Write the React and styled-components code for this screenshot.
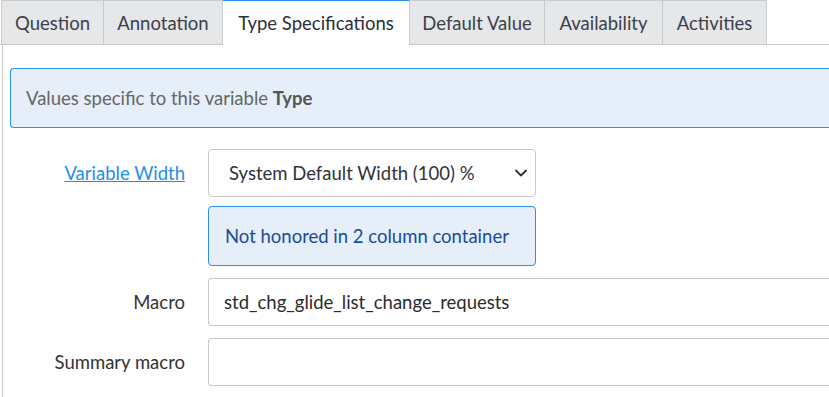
import React from 'react';
import styled, { createGlobalStyle } from 'styled-components';

const GlobalStyle = createGlobalStyle`
  html, body {
    margin: 0;
    padding: 0;
    background: #fff;
    overflow: hidden;
  }
  body {
    font-family: Lato, "Open Sans", sans-serif;
    font-size: 18.5px;
    color: #2e2e2e;
  }
`;

const Page = styled.div`
  width: 829px;
  height: 397px;
  overflow: hidden;
`;

const TabBar = styled.div`
  display: flex;
  padding-left: 1px;
  border-bottom: 1px solid #c9cbcd;
  height: 44px;
`;

const Tab = styled.div`
  display: flex;
  align-items: center;
  justify-content: center;
  width: ${(p) => p.$w}px;
  box-sizing: border-box;
  border: 1px solid #c9cbcd;
  border-left-width: ${(p) => (p.$first ? 1 : 0)}px;
  border-bottom: none;
  background: ${(p) => (p.$active ? '#fff' : '#e6e7e8')};
  color: ${(p) => (p.$active ? '#2b2f3a' : '#3b414b')};
  border-top-color: ${(p) => (p.$active ? '#2c8ef0' : '#c9cbcd')};
  margin-bottom: ${(p) => (p.$active ? '-1px' : '0')};
  height: ${(p) => (p.$active ? '45px' : '44px')};
  padding-bottom: ${(p) => (p.$active ? '1px' : '0')};
  white-space: nowrap;
`;

const Panel = styled.div`
  border-left: 1px solid #c9cbcd;
  margin-left: 2px;
  padding: 23px 0 0 7px;
  height: 340px;
`;

const InfoBox = styled.div`
  background: #e5eef9;
  border: 1px solid #2c8ef0;
  border-right: none;
  border-radius: 4px 0 0 4px;
  height: 60px;
  box-sizing: border-box;
  display: flex;
  align-items: center;
  padding-left: 15px;
  color: #666;
  b {
    font-weight: 700;
    color: #555;
  }
`;

const Form = styled.div`
  display: grid;
  grid-template-columns: 175px 1fr;
  column-gap: 23px;
  row-gap: 12px;
  margin-top: 21px;
`;

const Label = styled.div`
  display: flex;
  justify-content: flex-end;
  align-items: center;
  height: 48px;
  color: #333;
`;

const LinkLabel = styled.a`
  color: #1f8ef0;
  text-decoration: underline;
  cursor: pointer;
`;

const Field = styled.div`
  display: flex;
  flex-direction: column;
  gap: 9px;
`;

const SelectBox = styled.div`
  width: 328px;
  height: 48px;
  box-sizing: border-box;
  border: 1px solid #c8c8c8;
  border-radius: 4px;
  display: flex;
  align-items: center;
  justify-content: space-between;
  padding: 0 7px 0 20px;
  color: #2f3339;
  background: #fff;
`;

const Hint = styled.div`
  width: 328px;
  height: 60px;
  box-sizing: border-box;
  border: 1px solid #2c8ef0;
  border-radius: 4px;
  background: #e5eef9;
  display: flex;
  align-items: center;
  padding-left: 16px;
  color: #1a4a9c;
`;

const TextInput = styled.div`
  height: 48px;
  box-sizing: border-box;
  border: 1px solid #c8c8c8;
  border-right: none;
  border-radius: 4px 0 0 4px;
  display: flex;
  align-items: center;
  padding-left: 15px;
  color: #2b2b2b;
  background: #fff;
`;

const tabs = [
  { name: 'Question', w: 103 },
  { name: 'Annotation', w: 119 },
  { name: 'Type Specifications', w: 187, active: true },
  { name: 'Default Value', w: 135 },
  { name: 'Availability', w: 118 },
  { name: 'Activities', w: 104 },
];

function Chevron() {
  return (
    <svg width="14" height="14" viewBox="0 0 14 14" fill="none">
      <path d="M2 4.5 L7 9.5 L12 4.5" stroke="#2f3339" strokeWidth="1.8" strokeLinecap="round" strokeLinejoin="round" />
    </svg>
  );
}

export default function App() {
  return (
    <Page>
      <GlobalStyle />
      <TabBar>
        {tabs.map((t, i) => (
          <Tab key={t.name} $w={t.w} $first={i === 0} $active={t.active}>
            {t.name}
          </Tab>
        ))}
      </TabBar>
      <Panel>
        <InfoBox>
          Values specific to this variable&nbsp;<b>Type</b>
        </InfoBox>
        <Form>
          <Label>
            <LinkLabel>Variable Width</LinkLabel>
          </Label>
          <Field>
            <SelectBox>
              System Default Width (100) %
              <Chevron />
            </SelectBox>
            <Hint>Not honored in 2 column container</Hint>
          </Field>
          <Label>Macro</Label>
          <TextInput>std_chg_glide_list_change_requests</TextInput>
          <Label>Summary macro</Label>
          <TextInput />
        </Form>
      </Panel>
    </Page>
  );
}
